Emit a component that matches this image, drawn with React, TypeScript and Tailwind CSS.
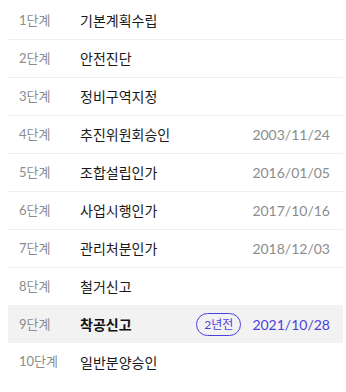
import React from "react";

interface Step {
  step: number;
  title: string;
  date?: string;
  badge?: string;
  current?: boolean;
}

const steps: Step[] = [
  { step: 1, title: "기본계획수립" },
  { step: 2, title: "안전진단" },
  { step: 3, title: "정비구역지정" },
  { step: 4, title: "추진위원회승인", date: "2003/11/24" },
  { step: 5, title: "조합설립인가", date: "2016/01/05" },
  { step: 6, title: "사업시행인가", date: "2017/10/16" },
  { step: 7, title: "관리처분인가", date: "2018/12/03" },
  { step: 8, title: "철거신고" },
  { step: 9, title: "착공신고", date: "2021/10/28", badge: "2년전", current: true },
  { step: 10, title: "일반분양승인" },
];

export default function App() {
  return (
    <div
      className="w-[346px] h-[392px] bg-white pt-[2px] pl-2 pr-[3px]"
      style={{ fontFamily: 'Lato, "Noto Sans CJK KR", sans-serif' }}
    >
      {steps.map((s, i) => (
        <div
          key={s.step}
          className={
            s.current
              ? "flex items-center h-[38px] pl-[11px] pr-[13px] bg-[#f2f2f2] -mt-px pt-px"
              : i === steps.length - 1
                ? "flex items-center h-[38px] pl-[11px] pr-[13px]"
                : "flex items-center h-[38px] pl-[11px] pr-[13px] border-b border-[#efefef]"
          }
        >
          <span className="w-[61px] shrink-0 text-[13px] text-[#8c8c8c]">
            {s.step}단계
          </span>
          <span
            className={
              s.current
                ? "flex-1 text-[14px] font-bold text-[#111111]"
                : "flex-1 text-[14px] text-[#1a1a1a]"
            }
          >
            {s.title}
          </span>
          {s.badge && (
            <span className="mr-[11px] flex h-[23px] w-[45px] items-center justify-center rounded-full border border-[#4b3fe0] text-[12px] text-[#4b3fe0]">
              {s.badge}
            </span>
          )}
          {s.date && (
            <span
              className={
                s.current
                  ? "text-[14px] text-[#4b3fe0]"
                  : "text-[14px] text-[#8c8c8c]"
              }
            >
              {s.date}
            </span>
          )}
        </div>
      ))}
    </div>
  );
}
